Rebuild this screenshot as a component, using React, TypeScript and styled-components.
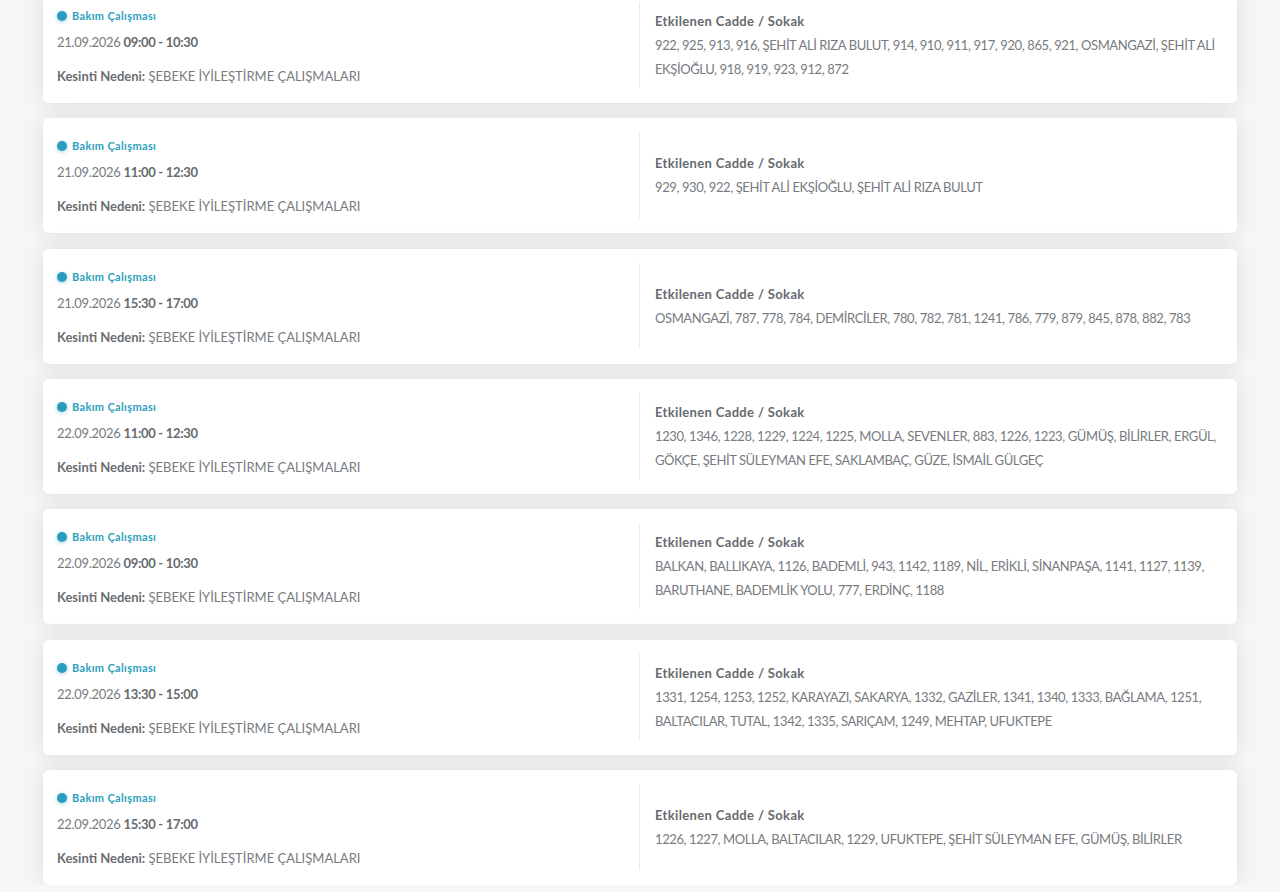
import React from "react";
import styled, { createGlobalStyle } from "styled-components";

const GlobalSt = createGlobalStyle`
  html, body {
    margin: 0;
    padding: 0;
    overflow: hidden;
    background: #f5f6f8;
    font-family: "Lato", "Noto Sans", sans-serif;
  }
`;

const ListSt = styled.div`
  display: flex;
  flex-direction: column;
  gap: 15.33px;
  padding: 0 43px;
  margin-top: -12px;
`;

const CardSt = styled.div`
  display: grid;
  grid-template-columns: 582px 1fr;
  min-height: 115px;
  box-sizing: border-box;
  padding: 14px 12px 15px 14px;
  background: #ffffff;
  border-radius: 6px;
  box-shadow: 0 0 22px rgba(0, 0, 0, 0.1);
`;

const InfoCol = styled.div`
  display: flex;
  flex-direction: column;
  min-height: 86px;
`;

const TypeLabel = styled.div`
  display: flex;
  align-items: center;
  gap: 5px;
  margin-top: 6px;
  line-height: 16px;
  font-size: 11px;
  font-weight: 700;
  letter-spacing: 0.35px;
  color: #2d9fbd;
`;

const Dot = styled.span`
  width: 10px;
  height: 10px;
  border-radius: 50%;
  background: #2a9cbf;
  box-shadow: 0 1px 4px rgba(42, 156, 191, 0.45);
`;

const DateLine = styled.div`
  margin-top: 8px;
  line-height: 20px;
  font-size: 13px;
  letter-spacing: -0.3px;
  color: #777b80;
  b {
    color: #666a6e;
    font-weight: 700;
  }
`;

const Reason = styled.div`
  margin-top: 14px;
  line-height: 20px;
  font-size: 13px;
  color: #777b80;
  b {
    color: #6a6e72;
    font-weight: 700;
  }
`;

const StreetCol = styled.div`
  display: flex;
  flex-direction: column;
  justify-content: center;
  border-left: 1px solid #eaebed;
  padding-left: 15px;
  font-size: 13px;
  line-height: 24px;
  letter-spacing: -0.4px;
  color: #777b80;
`;

const StreetTitle = styled.div`
  font-weight: 700;
  letter-spacing: 0.35px;
  color: #666a6e;
`;

interface Outage {
  date: string;
  time: string;
  streets: string;
}

const outages: Outage[] = [
  {
    date: "21.09.2026",
    time: "09:00 - 10:30",
    streets:
      "922, 925, 913, 916, ŞEHİT ALİ RIZA BULUT, 914, 910, 911, 917, 920, 865, 921, OSMANGAZİ, ŞEHİT ALİ EKŞİOĞLU, 918, 919, 923, 912, 872",
  },
  {
    date: "21.09.2026",
    time: "11:00 - 12:30",
    streets: "929, 930, 922, ŞEHİT ALİ EKŞİOĞLU, ŞEHİT ALİ RIZA BULUT",
  },
  {
    date: "21.09.2026",
    time: "15:30 - 17:00",
    streets:
      "OSMANGAZİ, 787, 778, 784, DEMİRCİLER, 780, 782, 781, 1241, 786, 779, 879, 845, 878, 882, 783",
  },
  {
    date: "22.09.2026",
    time: "11:00 - 12:30",
    streets:
      "1230, 1346, 1228, 1229, 1224, 1225, MOLLA, SEVENLER, 883, 1226, 1223, GÜMÜŞ, BİLİRLER, ERGÜL, GÖKÇE, ŞEHİT SÜLEYMAN EFE, SAKLAMBAÇ, GÜZE, İSMAİL GÜLGEÇ",
  },
  {
    date: "22.09.2026",
    time: "09:00 - 10:30",
    streets:
      "BALKAN, BALLIKAYA, 1126, BADEMLİ, 943, 1142, 1189, NİL, ERİKLİ, SİNANPAŞA, 1141, 1127, 1139, BARUTHANE, BADEMLİK YOLU, 777, ERDİNÇ, 1188",
  },
  {
    date: "22.09.2026",
    time: "13:30 - 15:00",
    streets:
      "1331, 1254, 1253, 1252, KARAYAZI, SAKARYA, 1332, GAZİLER, 1341, 1340, 1333, BAĞLAMA, 1251, BALTACILAR, TUTAL, 1342, 1335, SARIÇAM, 1249, MEHTAP, UFUKTEPE",
  },
  {
    date: "22.09.2026",
    time: "15:30 - 17:00",
    streets:
      "1226, 1227, MOLLA, BALTACILAR, 1229, UFUKTEPE, ŞEHİT SÜLEYMAN EFE, GÜMÜŞ, BİLİRLER",
  },
];

export default function App() {
  return (
    <>
      <GlobalSt />
      <ListSt>
        {outages.map((o, index) => (
          <CardSt key={index}>
            <InfoCol>
              <TypeLabel>
                <Dot />
                Bakım Çalışması
              </TypeLabel>
              <DateLine>
                {o.date} <b>{o.time}</b>
              </DateLine>
              <Reason>
                <b>Kesinti Nedeni:</b> ŞEBEKE İYİLEŞTİRME ÇALIŞMALARI
              </Reason>
            </InfoCol>
            <StreetCol>
              <StreetTitle>Etkilenen Cadde / Sokak</StreetTitle>
              <div>{o.streets}</div>
            </StreetCol>
          </CardSt>
        ))}
      </ListSt>
    </>
  );
}
